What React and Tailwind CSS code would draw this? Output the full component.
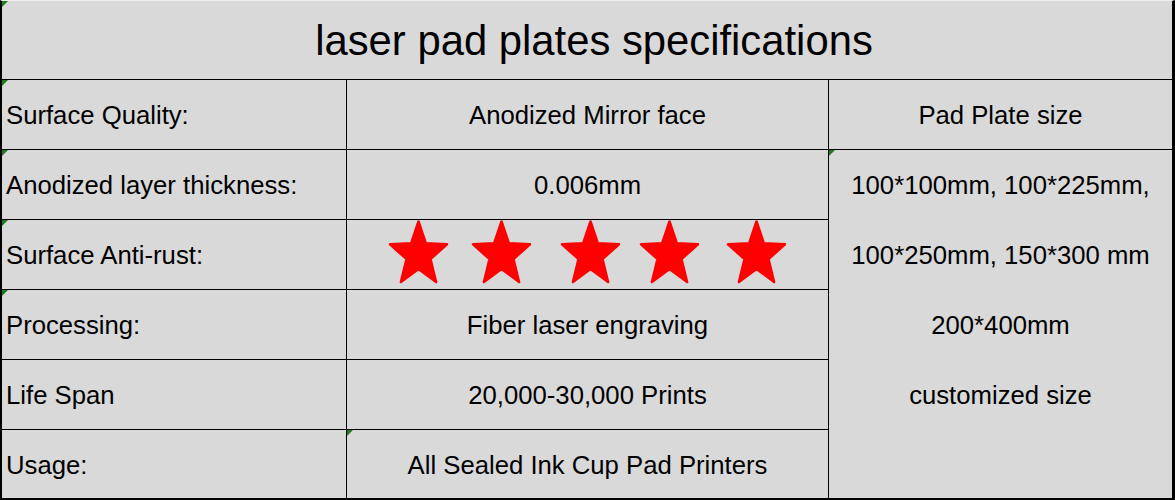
const rows = [
  { label: "Surface Quality:", value: "Anodized Mirror face", mark: true },
  { label: "Anodized layer thickness:", value: "0.006mm", mark: true },
  { label: "Surface Anti-rust:", stars: true, mark: true },
  { label: "Processing:", value: "Fiber laser engraving", mark: true },
  { label: "Life Span", value: "20,000-30,000 Prints" },
  { label: "Usage:", value: "All Sealed Ink Cup Pad Printers", markValue: true },
];

const sizes = ["100*100mm, 100*225mm,", "100*250mm, 150*300 mm", "200*400mm", "customized size"];

const starGaps = ["ml-0", "ml-[22px]", "ml-[28px]", "ml-[18px]", "ml-[26px]"];

function Mark() {
  return (
    <span className="pointer-events-none absolute left-0 top-0 h-[6px] w-[6px] bg-[#1d7d1d] [clip-path:polygon(0_0,100%_0,0_100%)]" />
  );
}

function Star({ className }) {
  return (
    <svg viewBox="0 0 61 64" className={`h-[64px] w-[61px] ${className}`}>
      <polygon
        points="30.5,1.5 37.9,23.3 59,24.3 42.5,39.1 48.1,62 30.5,48.9 12.9,62 18.5,39.1 2,24.3 23.1,23.3"
        fill="#ff0000"
        stroke="#ff0000"
        strokeWidth="2.5"
        strokeLinejoin="round"
      />
    </svg>
  );
}

export default function App() {
  return (
    <div className="h-[500px] w-[1175px] bg-white font-['Liberation_Sans',Arial,sans-serif] text-black">
      <div className="flex h-[500px] w-[1175px] flex-col border-t border-l-2 border-r-[3px] border-b-2 border-t-[#efefef] border-l-black border-r-black border-b-black bg-[#d9d9d9]">
        <div className="relative flex h-[79px] shrink-0 items-center justify-center border-b border-black pl-[14px] pt-[1px] text-[41.8px] leading-none">
          <Mark />
          laser pad plates specifications
        </div>
        <div className="grid flex-1 grid-cols-[345px_482px_1fr] grid-rows-[70px_70px_70px_70px_70px_68px] text-[25.7px] leading-none">
          {rows.map((row, i) => (
            <div key={row.label} className="contents">
              <div
                className={`relative flex items-center border-r border-black pl-[4px] pt-[3px] ${i < 5 ? "border-b" : ""}`}
              >
                {row.mark && <Mark />}
                {row.label}
              </div>
              <div
                className={`relative flex border-r border-black ${i < 5 ? "border-b" : ""} ${row.stars ? "items-start pl-[41px] pt-0" : "items-center justify-center pt-[3px]"}`}
                style={{ gridColumn: 2, gridRow: i + 1 }}
              >
                {row.markValue && <Mark />}
                {row.stars
                  ? starGaps.map((g, k) => <Star key={k} className={`${g} shrink-0`} />)
                  : row.value}
              </div>
            </div>
          ))}
          <div className="col-start-3 row-start-1 flex items-center justify-center border-b border-black pt-[3px]">
            Pad Plate size
          </div>
          <div className="relative col-start-3 row-span-5 row-start-2 flex flex-col pt-[1px]">
            <Mark />
            {sizes.map((s) => (
              <div key={s} className="flex h-[70px] shrink-0 items-center justify-center">
                {s}
              </div>
            ))}
          </div>
        </div>
      </div>
    </div>
  );
}
